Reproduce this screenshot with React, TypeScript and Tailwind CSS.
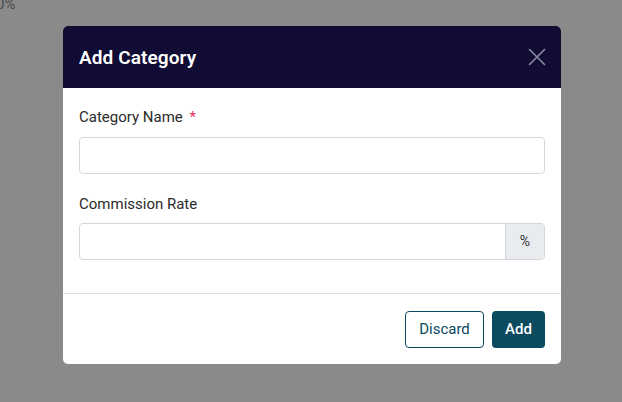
import React from "react";

export default function App() {
  return (
    <div
      className="relative w-[622px] h-[402px] overflow-hidden bg-[#8a8a8a]"
      style={{ fontFamily: "Roboto, 'Liberation Sans', sans-serif" }}
    >
      <div className="absolute left-[-4px] top-[-7px] text-[15px] text-[#4a4a4a]">0%</div>
      <div className="absolute left-[63px] top-[26px] w-[498px] rounded-[5px] bg-white overflow-hidden">
        <div className="h-[62px] bg-[#100c33] flex items-center justify-between pl-4 pr-[15px]">
          <h2 className="text-[19px] font-semibold text-white tracking-[0.1px] mt-[2px]">Add Category</h2>
          <svg width="18" height="18" viewBox="0 0 18 18" className="text-[#8c8aa3]">
            <path d="M1.5 1.5 L16.5 16.5 M16.5 1.5 L1.5 16.5" stroke="currentColor" strokeWidth="1.6" strokeLinecap="round" />
          </svg>
        </div>
        <div className="px-4 pt-[18px] pb-4 border-b border-[#dedede]">
          <div className="mb-[19px]">
            <label className="block text-[15px] leading-[22px] text-[#2a2a2a] mb-[9px]">
              Category Name <span className="text-[#e8345f] ml-[3px]">*</span>
            </label>
            <div className="h-[37px] rounded-[4px] border border-[#d4d7dc]" />
          </div>
          <div className="mb-[17px]">
            <label className="block text-[15px] leading-[22px] text-[#2a2a2a] mb-[8px]">
              Commission Rate
            </label>
            <div className="h-[37px] rounded-[4px] border border-[#d4d7dc] flex overflow-hidden">
              <div className="flex-1" />
              <div className="w-[39px] bg-[#e9ecef] border-l border-[#d4d7dc] flex items-center justify-center text-[14px] text-[#333]">
                %
              </div>
            </div>
          </div>
        </div>
        <div className="flex justify-end gap-2 px-4 pt-[17px] pb-4">
          <button className="h-[37px] w-[79px] rounded-[4px] border border-[#0b4a5f] text-[#0b4a5f] text-[15px] bg-white">
            Discard
          </button>
          <button className="h-[37px] w-[53px] rounded-[4px] bg-[#0b4a5f] text-white text-[15px] font-medium">
            Add
          </button>
        </div>
      </div>
    </div>
  );
}
